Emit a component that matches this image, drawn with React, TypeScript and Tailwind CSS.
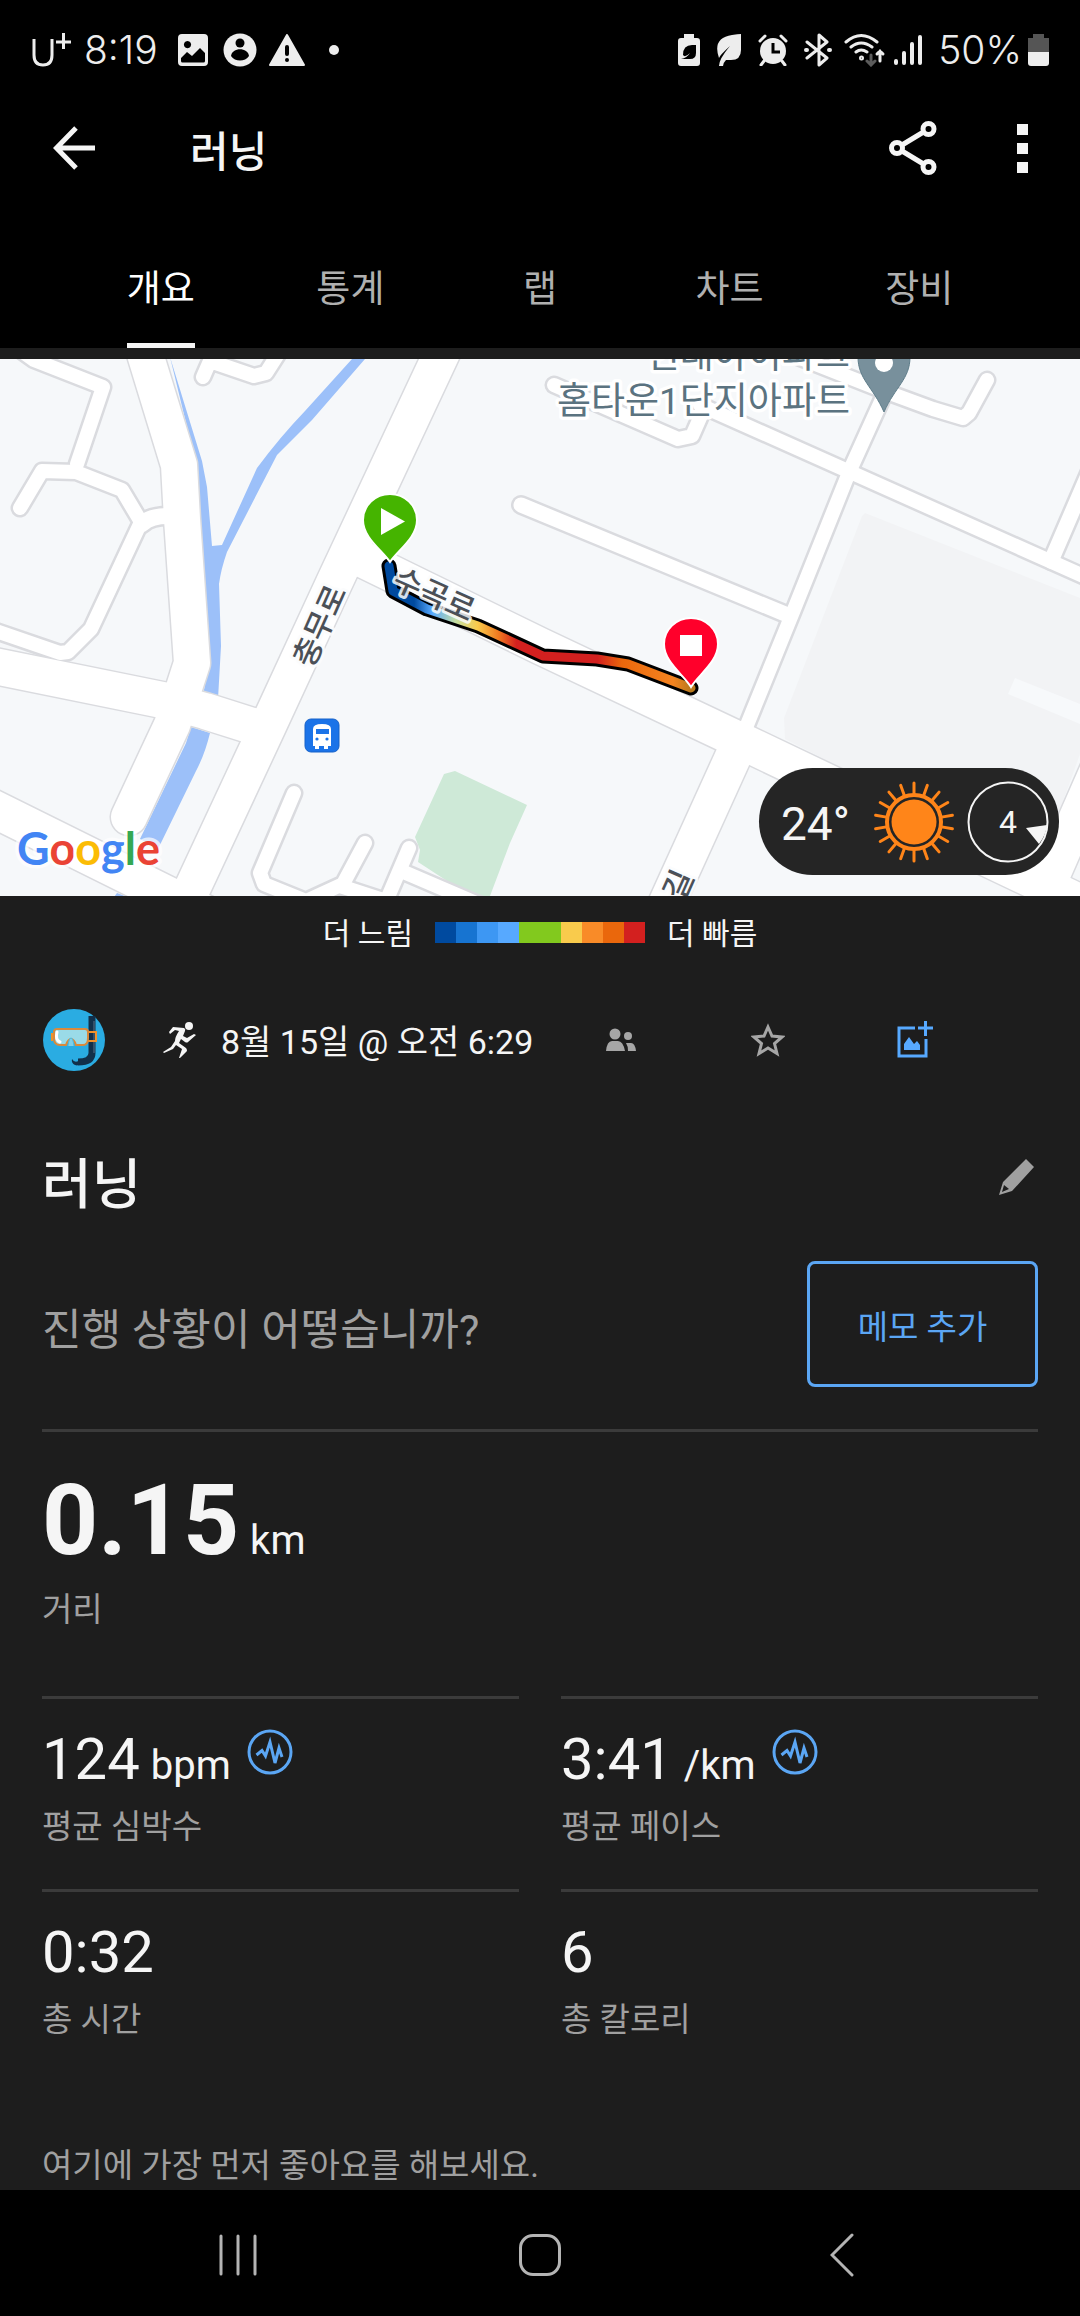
import type { ReactNode } from "react";

const SLOW_TO_FAST = [
  "bg-[#004a9f]",
  "bg-[#1774d1]",
  "bg-[#3d97f3]",
  "bg-[#57a9ff]",
  "bg-[#82c91e]",
  "bg-[#82c91e]",
  "bg-[#f9cb4c]",
  "bg-[#f98b28]",
  "bg-[#ea670c]",
  "bg-[#d3201f]",
];

const TABS = ["개요", "통계", "랩", "차트", "장비"];

function StatusBar() {
  return (
    <div className="flex h-24 items-center justify-between pr-[31px] pl-8 pt-1 font-[Inter,sans-serif] text-[39px] leading-[40px] font-light text-[#ededed]">
      <div className="flex items-center">
        <svg width="40" height="34" viewBox="0 0 40 34" fill="none" stroke="currentColor" strokeWidth="3">
          <path d="M2 6v16q0 10 9 10t9-10V6M24 9h15M31.500 0v16" />
        </svg>
        <time className="ml-3 w-[77px]">8:19</time>
        <svg className="ml-4 size-8" viewBox="0 0 32 32" fill="currentColor">
          <path
            fillRule="evenodd"
            d="M5 0h22q4 0 4 4v24q0 4-4 4H5q-4 0-4-4V4q0-4 4-4ZM10.500 7a3.600 3.600 0 1 0 .01 0ZM4 24v3q0 1.500 1.500 1.500h21q1.500 0 1.500-1.500v-8l-5-5-8 8-5-4Z"
          />
        </svg>
        <svg className="ml-[14px] size-[34px]" viewBox="0 0 34 34">
          <circle cx="17" cy="17" r="16.500" fill="currentColor" />
          <circle cx="17" cy="10" r="4.500" fill="#000" />
          <path d="M8 23c1-9 17-9 18 0-4 6-14 6-18 0Z" fill="#000" />
        </svg>
        <svg className="ml-3 h-8 w-9" viewBox="0 0 36 32">
          <path d="M18 1 35 31H1Z" fill="currentColor" stroke="currentColor" strokeLinejoin="round" strokeWidth="2" />
          <path d="M18 13v7" stroke="#000" strokeWidth="4" strokeLinecap="round" />
          <circle cx="18" cy="26" r="2" fill="#000" />
        </svg>
        <span className="ml-6 size-[10px] rounded-full bg-[#ededed]" />
      </div>
      <div className="flex items-center">
        <svg width="22" height="32" viewBox="0 0 22 32">
          <path d="M6 0h10v4h3q3 0 3 3v22q0 3-3 3H3q-3 0-3-3V7q0-3 3-3h3Z" fill="currentColor" />
          <path d="M18 11v8q0 6-6 6H3q6-1 9-6-5 5-7 2 0-10 9-10Z" fill="#000" />
        </svg>
        <svg className="ml-4" width="26" height="34" viewBox="0 0 26 34">
          <path d="M25 1v16q0 10-10 10H10q-3 3-3 6H3q0-7 11-20Q4 22 3 25-4 5 16 2q6-1 9-1Z" fill="currentColor" />
        </svg>
        <svg className="ml-4" width="30" height="32" viewBox="0 0 30 32">
          <circle cx="15" cy="17" r="13" fill="currentColor" />
          <path d="M2 7l5-5M28 7l-5-5M6 27l-3 4M24 27l3 4" stroke="currentColor" strokeWidth="3" strokeLinecap="round" />
          <path d="M15 9v9h7" stroke="#000" strokeWidth="3" fill="none" />
        </svg>
        <svg className="ml-4" width="28" height="34" viewBox="0 0 28 34" fill="none" stroke="currentColor" strokeWidth="3" strokeLinejoin="round" strokeLinecap="round">
          <path d="M3 9l20 16-8 7V2l8 7L3 25" />
          <path d="M2 17h1M25 17h1" strokeWidth="4" />
        </svg>
        <svg className="ml-3" width="42" height="34" viewBox="0 0 42 34" fill="none" stroke="currentColor" strokeWidth="3" strokeLinecap="round">
          <path d="M2 9Q17-4 33 9M7 14q10-8 21 0M12 19q5-4 11 0" />
          <circle cx="17.500" cy="25" r="1" />
          <path d="M36 28V18M33 21l3-3 3 3" />
          <path d="M27 22v9M23 28l4 4 4-4" stroke="#5c5c5c" />
        </svg>
        <svg className="ml-2" width="28" height="32" viewBox="0 0 28 32" stroke="currentColor" strokeWidth="4" strokeLinecap="round">
          <path d="M2 27v2M10 19v10M18 10v19M26 3v26" />
        </svg>
        <span className="ml-4">50%</span>
        <svg className="ml-[6px]" width="21" height="32" viewBox="0 0 21 32">
          <path d="M5 0h11v4h5v15H0V4h5Z" fill="#555" />
          <path d="M0 18h21v11q0 3-3 3H3q-3 0-3-3Z" fill="currentColor" />
        </svg>
      </div>
    </div>
  );
}

function AppBar() {
  return (
    <header className="flex h-[104px] items-center pr-[52px] pl-[53px] text-[#f5f5f5]">
      <button aria-label="뒤로">
        <svg width="43" height="44" viewBox="0 0 43 44" fill="none" stroke="currentColor" strokeWidth="5">
          <path d="M42 22H4M23 2 3.500 22 23 42" />
        </svg>
      </button>
      <h1 className="ml-[94px] flex-1 pt-[10px] text-[42px] leading-[48px] font-medium">러닝</h1>
      <button aria-label="공유">
        <svg width="48" height="54" viewBox="0 0 48 54" fill="none" stroke="currentColor" strokeWidth="5">
          <circle cx="8" cy="27" r="5.500" />
          <circle cx="39.500" cy="8" r="5.500" />
          <circle cx="39.500" cy="46" r="5.500" />
          <path d="M13 24 34.500 11M13 30l21.500 13" />
        </svg>
      </button>
      <button aria-label="더보기" className="ml-20 flex flex-col gap-2">
        <span className="size-[11px] bg-current" />
        <span className="size-[11px] bg-current" />
        <span className="size-[11px] bg-current" />
      </button>
    </header>
  );
}

function Tabs() {
  return (
    <nav role="tablist" className="grid h-[148px] grid-cols-5 items-end justify-items-center px-[66px] text-[37px] leading-[48px]">
      {TABS.map((tab, i) => (
        <button
          key={tab}
          role="tab"
          aria-selected={i === 0}
          className={
            i === 0
              ? "border-b-[5px] border-[#f5f5f5] pb-[29px] text-white"
              : "border-b-[5px] border-transparent pb-[29px] text-[#b0b0b0]"
          }
        >
          {tab}
        </button>
      ))}
    </nav>
  );
}

type Road = { d: string; w: number; c: number };

const ROADS: Road[] = [
  // side streets
  { d: "M20 -9 34 1 103 28 77 105", w: 14, c: 5 },
  { d: "M20 149 42 112 76 113 122 131 141 163 91 270 68 293 60 294 -10 270", w: 14, c: 5 },
  { d: "M142 165Q150 157 168 157", w: 16, c: 5 },
  { d: "M203 18 210 2 254 17 266 14 280 -8", w: 14, c: 5 },
  { d: "M294 434 260 514 264 525 306 542 343 525 365 484", w: 14, c: 5 },
  { d: "M340 527 386 542M409 489 388 538M406 514 490 550", w: 14, c: 5 },
  { d: "M554 26 678 80 692 77 703 52", w: 14, c: 5 },
  { d: "M700 46 1090 220", w: 14, c: 5 },
  { d: "M790 -5 884 32 933 50 963 59 969 54 987 21", w: 14, c: 5 },
  { d: "M884 36 850 111 793 253 747 366", w: 14, c: 5 },
  { d: "M521 146 790 257", w: 15, c: 5 },
  { d: "M1095 100 1051 202", w: 15, c: 5 },
  // main roads
  { d: "M142 -15 179 106 182 160 192 304 172 366 129 458", w: 36, c: 3 },
  { d: "M-20 304 172 343 205 352 262 370", w: 36, c: 3 },
  { d: "M446 -15 335 222 268 367 185 545", w: 36, c: 3 },
  { d: "M-20 443 220 562", w: 37, c: 3 },
  { d: "M362 200 540 287 743 383 1100 553", w: 36, c: 3 },
  { d: "M733 398 664 550", w: 36, c: 3 },
  { d: "M1105 395 1048 525", w: 36, c: 3 },
];

function StreetName({ x, y, angle, size, children }: { x: number; y: number; angle: number; size: number; children: ReactNode }) {
  return (
    <text
      transform={`translate(${x} ${y}) rotate(${angle})`}
      textAnchor="middle"
      dominantBaseline="central"
      fontSize={size}
      fontWeight="500"
      fill="#4b5057"
      stroke="#fbfcfd"
      strokeOpacity="0.85"
      strokeWidth="6"
      strokeLinejoin="round"
      paintOrder="stroke"
    >
      {children}
    </text>
  );
}

function RouteMap() {
  return (
    <svg className="block w-full" viewBox="0 0 1080 537" role="img" aria-label="러닝 경로 지도">
      <defs>
        <linearGradient id="pace" gradientUnits="userSpaceOnUse" x1="390" y1="0" x2="691" y2="0">
          <stop offset="0" stopColor="#004a9f" />
          <stop offset="0.08" stopColor="#004a9f" />
          <stop offset="0.14" stopColor="#57a9ff" />
          <stop offset="0.22" stopColor="#c6dfa0" />
          <stop offset="0.29" stopColor="#f9cb4c" />
          <stop offset="0.36" stopColor="#f07a20" />
          <stop offset="0.42" stopColor="#d3201f" />
          <stop offset="0.69" stopColor="#d3201f" />
          <stop offset="0.77" stopColor="#ea670c" />
          <stop offset="0.94" stopColor="#f58420" />
          <stop offset="1" stopColor="#b8791c" />
        </linearGradient>
      </defs>
      <rect width="1080" height="537" fill="#f6f8fa" />
      <path d="M865 154 1080 239V395L1056 462 960 462 840 408 785 380 784 359 862 157Z" fill="#f2f3f5" />
      <path d="M1015 319 1080 345V365L1008 335Z" fill="#f7f9fb" />
      <path d="M444 415 455 412 527 446 510 484 490 537H470L418 503 420 491 415 478Z" fill="#cee9d7" />
      <path
        d="M170 -2 202 102 207 128 212 187 222 186 257 109Q280 78 305 52L352 0H365L312 61 277 96 227 193Q221 210 219 225L221 287 218 340 203 336 209 305 196 105ZM191 368 210 374Q205 395 196 412L158 490 140 480 186 384ZM117 534 135 541 112 541Z"
        fill="#9cc0f9"
      />
      <g fill="none" strokeLinecap="round" strokeLinejoin="round">
        {ROADS.map((r) => (
          <path key={r.d} d={r.d} stroke="#dadbdf" strokeWidth={r.w + r.c} />
        ))}
        {ROADS.map((r) => (
          <path key={r.d} d={r.d} stroke="#fff" strokeWidth={r.w} />
        ))}
        <path d="M389 207 393 232 427 250 478 267 543 297 597 300 628 305 691 329" stroke="#000" strokeWidth="15" />
        <path d="M389 207 393 232 427 250 478 267 543 297 597 300 628 305 691 329" stroke="url(#pace)" strokeWidth="9" />
      </g>
      <g>
        <rect x="305" y="360" width="34" height="33" rx="6" fill="#1b73e8" stroke="#1762c9" />
        <path d="M313 370q0-5 9-5t9 5v17h-3v3h-4v-3h-5v3h-4v-3h-2Z" fill="#fff" />
        <path d="M316 370h13v5h-13Z" fill="#1b73e8" />
        <circle cx="317" cy="380" r="1.600" fill="#1b73e8" />
        <circle cx="327" cy="380" r="1.600" fill="#1b73e8" />
      </g>
      <StreetName x={434} y={236} angle={24} size={31}>수곡로</StreetName>
      <StreetName x={320} y={267} angle={-66} size={31}>충무로</StreetName>
      <StreetName x={679} y={526} angle={-66} size={31}>길</StreetName>
      <g fontSize="37" fill="#5b7380" stroke="#fff" strokeWidth="7" strokeLinejoin="round" paintOrder="stroke" textAnchor="end">
        <text x="850" y="9">현대아이파크</text>
        <text x="850" y="55">홈타운1단지아파트</text>
      </g>
      <path d="M858 -2c0 22 15 30 26 55 11-25 26-33 26-55Z" fill="#78909c" stroke="#5f7d8a" />
      <circle cx="884" cy="4" r="9" fill="#fff" />
      <g stroke="#fff" strokeWidth="2">
        <path d="M390 203c-8-12-27-24-27-42a27 26 0 0 1 54 0c0 18-19 30-27 42Z" fill="#45b400" />
        <path d="M691 328c-8-13-27-25-27-43a27 26 0 0 1 54 0c0 18-19 30-27 43Z" fill="#ff002b" />
      </g>
      <path d="M381 149v27l24-13.500Z" fill="#fff" />
      <path d="M680 276h22v21h-22Z" fill="#fff" />
      <text
        x="17"
        y="506"
        fontFamily="Lato, sans-serif"
        fontSize="45"
        fontWeight="700"
        stroke="#fff"
        strokeOpacity="0.7"
        strokeWidth="7"
        strokeLinejoin="round"
        paintOrder="stroke"
      >
        <tspan fill="#4285f4">G</tspan>
        <tspan fill="#ea4335">o</tspan>
        <tspan fill="#fbbc05">o</tspan>
        <tspan fill="#4285f4">g</tspan>
        <tspan fill="#34a853">l</tspan>
        <tspan fill="#ea4335">e</tspan>
      </text>
    </svg>
  );
}

function WeatherPill() {
  const rays = Array.from({ length: 18 }, (_, i) => i * 20);
  return (
    <div className="absolute right-[21px] bottom-[21px] flex h-[107px] w-[300px] items-center rounded-full bg-[#252525] pl-[22px] text-[#f5f5f5]">
      <span className="w-[68px] pt-1 text-[46px] leading-[56px]">24°</span>
      <svg className="ml-6" width="82" height="82" viewBox="-41 -41 82 82" aria-label="맑음" stroke="#ff8519">
        {rays.map((a) => (
          <path key={a} d="M0 -28V-39" transform={`rotate(${a})`} strokeWidth="3" strokeLinecap="round" />
        ))}
        <circle r="27" fill="#252525" strokeWidth="4" />
        <circle r="22.500" fill="#ff8519" stroke="none" />
      </svg>
      <span className="relative ml-3 flex size-[82px] items-center justify-center text-[32px] leading-[40px]">
        <svg className="absolute inset-0" viewBox="-41 -41 82 82">
          <circle r="39.500" fill="none" stroke="#f5f5f5" strokeWidth="2" />
          <path d="M18 6 39 3Q38 13 31 22Z" fill="#f5f5f5" />
        </svg>
        4
      </span>
    </div>
  );
}

function Avatar() {
  return (
    <svg className="shrink-0" width="62" height="62" viewBox="0 0 62 62" role="img" aria-label="프로필">
      <circle cx="31" cy="31" r="31" fill="#2aace2" />
      <path d="M49 7v37q0 9-14 9" fill="none" stroke="#12304a" strokeWidth="7" />
      <path d="M29 50q3 5 8 1 0 7-5 5-4-2-3-6Z" fill="#12304a" />
      <path d="M51 12v32" stroke="#5b7288" strokeWidth="1" />
      <path d="M45 23h8v9h-8M9 24v8" fill="none" stroke="#f0922a" strokeWidth="2" />
      <path d="M14 20h28q3 0 3 3v6q0 7-5 7H33q-2-6-5-6t-5 6h-6q-6 0-6-7v-6q0-3 3-3Z" fill="#9adbe8" stroke="#d98a3d" strokeWidth="2" />
      <path d="M14 23q-2 8 3 10" fill="none" stroke="#fff" strokeWidth="3" strokeLinecap="round" />
      <path d="M25 37q1-8 3-8t3 8" fill="#7fd0ea" stroke="#4dbbe0" />
    </svg>
  );
}

function SummaryRow() {
  return (
    <div className="flex h-36 items-center pr-[91px] pl-[43px]">
      <Avatar />
      <svg className="ml-[58px]" width="34" height="36" viewBox="0 0 34 36" fill="#f5f5f5" aria-label="러닝">
        <circle cx="26" cy="4" r="4" />
        <path d="M10 5 21 6q2 1 1 3l-2 5 4 2 7-4 2 1-8 7q-1 1-3 0l-4-3-2 4 7 5q1 1 1 3l-6 6-1 1h-1l3-9-6-4-3 4-9 4-1-1 8-5 4-6q0-4 4-10l-4-1-5 4-1-2Z" />
      </svg>
      <time className="ml-6 pt-1 text-[34px] leading-[48px] text-[#f5f5f5]">8월 15일 @ 오전 6:29</time>
      <div className="ml-auto grid w-[442px] grid-cols-3 items-center justify-items-center text-[#a6a6a6]">
        <button aria-label="공개 대상">
          <svg width="30" height="24" viewBox="0 0 30 24" fill="currentColor">
            <circle cx="9" cy="6" r="5.500" />
            <circle cx="22" cy="8" r="4" />
            <path d="M0 23q1-10 6-10h6q5 0 7 10ZM20 15h5q4 0 5 8h-8q0-5-2-8Z" />
          </svg>
        </button>
        <button aria-label="즐겨찾기">
          <svg width="34" height="34" viewBox="0 0 34 34" fill="none" stroke="currentColor" strokeWidth="3">
            <path d="m17 4 4 9 10 1-7.500 6.500L26 30.500 17 25l-9 5.500 2.500-10L3 14l10-1Z" />
          </svg>
        </button>
        <button aria-label="사진 추가">
          <svg width="36" height="40" viewBox="0 0 36 40" fill="none" stroke="#57a9ff" strokeWidth="3">
            <path d="M18 8H2v28h27V19M28.500 1v15M21 8h15" />
            <path d="M7 30v-6l5-7 5 7 3-3 3 4v5Z" fill="#57a9ff" stroke="none" />
          </svg>
        </button>
      </div>
    </div>
  );
}

function PulseButton() {
  return (
    <button aria-label="차트 보기" className="mt-[2px] ml-4 self-start">
      <svg width="46" height="46" viewBox="0 0 46 46" fill="none" stroke="#5ba6f4" strokeWidth="3">
        <circle cx="23" cy="23" r="21" />
        <path d="M9.500 26 15 21.500 18.500 27 23 13 28 34 32 19 35 28" />
      </svg>
    </button>
  );
}

function Stat({ value, unit, label, pulse }: { value: string; unit?: string; label: string; pulse?: boolean }) {
  return (
    <div className="border-t-3 border-[#3b3b3b] pt-7 pb-[42px]">
      <dd className="flex items-baseline text-[58px] leading-[64px] text-[#f5f5f5]">
        {value}
        {unit && <span className="ml-[11px] text-[40px] leading-[40px]">{unit}</span>}
        {pulse && <PulseButton />}
      </dd>
      <dt className="mt-4 text-[33px] leading-[40px] text-[#a0a0a0]">{label}</dt>
    </div>
  );
}

function NavBar() {
  return (
    <nav className="mt-auto grid h-[126px] grid-cols-3 items-center justify-items-center bg-black px-[87px] pt-1">
      <button aria-label="최근 앱">
        <svg width="40" height="42" viewBox="0 0 40 42" stroke="#b4b4b4" strokeWidth="3" strokeLinecap="round">
          <path d="M3 2v38M20 2v38M37 2v38" />
        </svg>
      </button>
      <button aria-label="홈" className="size-[42px] rounded-[14px] border-3 border-[#b4b4b4]" />
      <button aria-label="뒤로">
        <svg width="24" height="44" viewBox="0 0 24 44" fill="none" stroke="#b4b4b4" strokeWidth="3" strokeLinecap="round">
          <path d="M22 2 2 22 22 42" />
        </svg>
      </button>
    </nav>
  );
}

export default function App() {
  return (
    <div lang="ko" className="flex min-h-screen flex-col bg-[#1d1d1d] font-[Roboto,'Noto_Sans_CJK_KR',sans-serif]">
      <div className="bg-black">
        <StatusBar />
        <AppBar />
        <Tabs />
      </div>
      <main>
        <section className="relative mt-[11px]">
          <RouteMap />
          <WeatherPill />
        </section>
        <div className="flex h-[72px] items-center justify-center gap-[22px] text-[30px] leading-[40px] text-[#f5f5f5]">
          <span className="pt-1">더 느림</span>
          <span className="flex h-[21px]">
            {SLOW_TO_FAST.map((c, i) => (
              <span key={i} className={`w-[21px] ${c}`} />
            ))}
          </span>
          <span className="pt-1">더 빠름</span>
        </div>
        <SummaryRow />
        <div className="px-[42px]">
          <div className="flex h-[136px] items-center justify-between">
            <h2 className="pt-3 text-[54px] leading-[64px] font-medium text-[#f5f5f5]">러닝</h2>
            <button aria-label="제목 편집" className="mr-1 mb-1.5">
              <svg width="35" height="36" viewBox="0 0 35 36" fill="#a0a0a0">
                <path fillRule="evenodd" d="M27 0 35 8 13 32 0 36 4 23ZM5 26 3 33 10 30Z" />
              </svg>
            </button>
          </div>
          <div className="flex items-center justify-between py-[13px]">
            <p className="pt-3 text-[43px] leading-[56px] text-[#a0a0a0]">진행 상황이 어떻습니까?</p>
            <button className="h-[126px] w-[231px] rounded-lg border-3 border-[#5ba6f4] pt-2 text-[33px] leading-[40px] text-[#5ba6f4]">
              메모 추가
            </button>
          </div>
          <dl className="mt-[29px]">
            <div className="border-t-3 border-[#3b3b3b] pt-10">
              <dd className="flex items-baseline text-[98px] leading-[98px] font-bold text-[#f5f5f5]">
                0.15
                <span className="ml-[11px] text-[40px] leading-[40px] font-normal">km</span>
              </dd>
              <dt className="mt-5 text-[33px] leading-[40px] text-[#a0a0a0]">거리</dt>
            </div>
            <div className="mt-[66px] grid grid-cols-2 gap-x-[42px]">
              <Stat value="124" unit="bpm" label="평균 심박수" pulse />
              <Stat value="3:41" unit="/km" label="평균 페이스" pulse />
              <Stat value="0:32" label="총 시간" />
              <Stat value="6" label="총 칼로리" />
            </div>
          </dl>
          <p className="pt-16 pb-1 text-[33px] leading-[40px] text-[#a0a0a0]">여기에 가장 먼저 좋아요를 해보세요.</p>
        </div>
      </main>
      <NavBar />
    </div>
  );
}
